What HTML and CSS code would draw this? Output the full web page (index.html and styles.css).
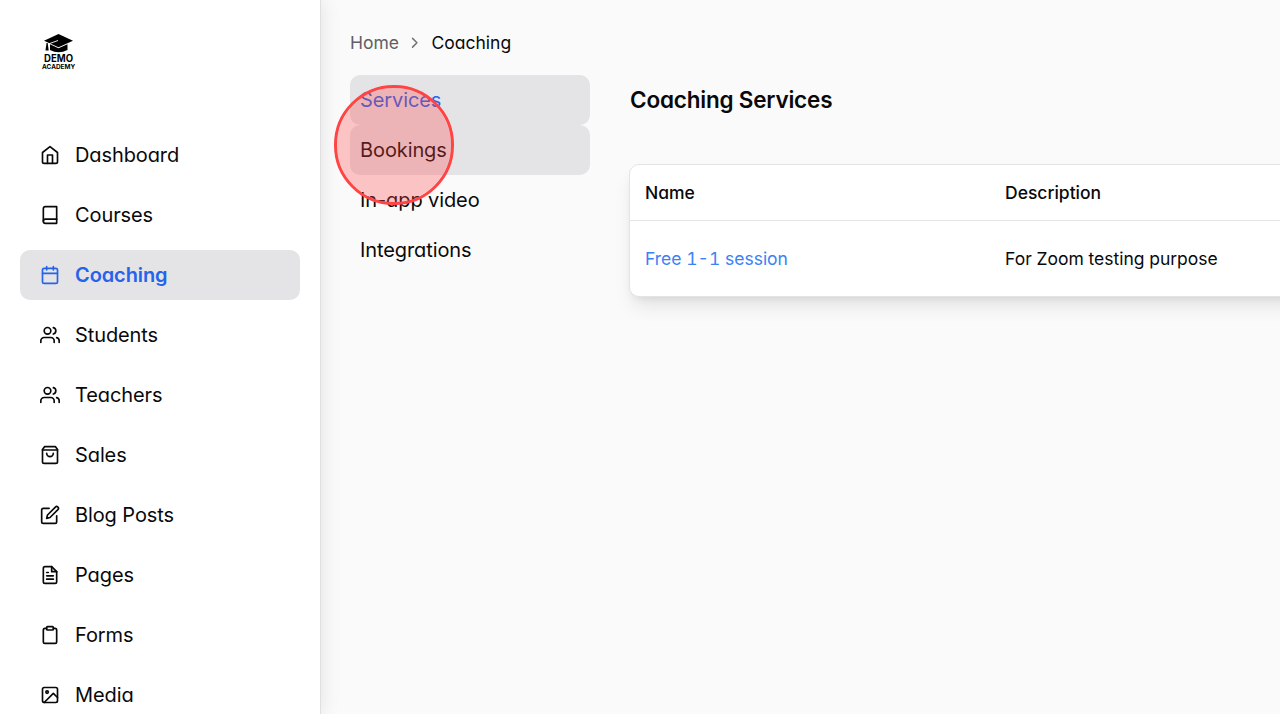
FILE: index.html
```html
<!DOCTYPE html>
<html lang="en">
<head>
    <meta charset="UTF-8">
    <meta name="viewport" content="width=device-width, initial-scale=1.0">
    <title>Coaching Services</title>
    <link rel="stylesheet" href="styles.css">
</head>
<body>
    <div class="layout">
        <aside class="sidebar">
            <div class="logo">
                <svg viewBox="0 0 34 36">
                    <path d="M2 6.700 16.500 0 31 6.700 16.500 13.200z"/>
                    <path d="M8 10.300V16q8.500 4.500 17.500 0v-5.700l-9 4z"/>
                    <path class="tassel" d="M16 6.500 6.900 9.800V14"/>
                    <path d="M4.500 9h1.200l1 7.500H3.500z"/>
                    <text class="logo-top" x="16.600" y="28" textLength="29" lengthAdjust="spacingAndGlyphs">DEMO</text>
                    <text class="logo-bottom" x="16.600" y="35" textLength="33" lengthAdjust="spacingAndGlyphs">ACADEMY</text>
                </svg>
            </div>
            <nav class="menu">
                <a class="menu-item">
                    <svg class="icon" viewBox="0 0 24 24"><path d="M3 9l9-7 9 7v11a2 2 0 0 1-2 2H5a2 2 0 0 1-2-2z"/><path d="M9 22V12h6v10"/></svg>
                    Dashboard
                </a>
                <a class="menu-item">
                    <svg class="icon" viewBox="0 0 24 24"><path d="M4 19.500A2.500 2.500 0 0 1 6.500 17H20"/><path d="M6.500 2H20v20H6.500A2.500 2.500 0 0 1 4 19.500v-15A2.500 2.500 0 0 1 6.500 2z"/></svg>
                    Courses
                </a>
                <a class="menu-item active">
                    <svg class="icon" viewBox="0 0 24 24"><rect x="3" y="4" width="18" height="18" rx="2"/><path d="M16 2v4M8 2v4M3 10h18"/></svg>
                    Coaching
                </a>
                <a class="menu-item">
                    <svg class="icon" viewBox="0 0 24 24"><path d="M17 21v-2a4 4 0 0 0-4-4H5a4 4 0 0 0-4 4v2"/><circle cx="9" cy="7" r="4"/><path d="M23 21v-2a4 4 0 0 0-3-3.870M16 3.130a4 4 0 0 1 0 7.750"/></svg>
                    Students
                </a>
                <a class="menu-item">
                    <svg class="icon" viewBox="0 0 24 24"><path d="M17 21v-2a4 4 0 0 0-4-4H5a4 4 0 0 0-4 4v2"/><circle cx="9" cy="7" r="4"/><path d="M23 21v-2a4 4 0 0 0-3-3.870M16 3.130a4 4 0 0 1 0 7.750"/></svg>
                    Teachers
                </a>
                <a class="menu-item">
                    <svg class="icon" viewBox="0 0 24 24"><path d="M5.400 2 3 5.500V20a2 2 0 0 0 2 2h14a2 2 0 0 0 2-2V5.500L18.600 2z"/><path d="M3 6h18M16 10a4 4 0 0 1-8 0"/></svg>
                    Sales
                </a>
                <a class="menu-item">
                    <svg class="icon" viewBox="0 0 24 24"><path d="M11 4H4a2 2 0 0 0-2 2v14a2 2 0 0 0 2 2h14a2 2 0 0 0 2-2v-7"/><path d="M18.500 2.500a2.121 2.121 0 0 1 3 3L12 15l-4 1 1-4 9.500-9.500z"/></svg>
                    Blog Posts
                </a>
                <a class="menu-item">
                    <svg class="icon" viewBox="0 0 24 24"><path d="M14 2H6a2 2 0 0 0-2 2v16a2 2 0 0 0 2 2h12a2 2 0 0 0 2-2V8z"/><path d="M14 2v6h6M16 13H8M16 17H8M10 9H8"/></svg>
                    Pages
                </a>
                <a class="menu-item">
                    <svg class="icon" viewBox="0 0 24 24"><path d="M16 4h2a2 2 0 0 1 2 2v14a2 2 0 0 1-2 2H6a2 2 0 0 1-2-2V6a2 2 0 0 1 2-2h2"/><rect x="8" y="2" width="8" height="4" rx="1"/></svg>
                    Forms
                </a>
                <a class="menu-item">
                    <svg class="icon" viewBox="0 0 24 24"><rect x="3" y="3" width="18" height="18" rx="2"/><circle cx="8.500" cy="8.500" r="1.500"/><path d="M21 15l-5-5L5 21"/></svg>
                    Media
                </a>
            </nav>
        </aside>

        <main class="main">
            <div class="breadcrumb">
                <a class="crumb">Home</a>
                <svg class="chevron" viewBox="0 0 24 24"><path d="m9 18 6-6-6-6"/></svg>
                <span>Coaching</span>
            </div>
            <div class="content">
                <nav class="subnav">
                    <a class="subnav-item selected">Services</a>
                    <a class="subnav-item hovered">Bookings<span class="click-marker"></span></a>
                    <a class="subnav-item">In-app video</a>
                    <a class="subnav-item">Integrations</a>
                </nav>
                <section class="services">
                    <h1>Coaching Services</h1>
                    <div class="card">
                        <div class="row head">
                            <span>Name</span>
                            <span>Description</span>
                        </div>
                        <div class="row">
                            <a class="link">Free 1-1 session</a>
                            <span>For Zoom testing purpose</span>
                        </div>
                    </div>
                </section>
            </div>
        </main>
    </div>
</body>
</html>
```

FILE: styles.css
```css
* {
    box-sizing: border-box;
}
body {
    margin: 0;
    font-family: Inter, "Liberation Sans", sans-serif;
    font-size: 20px;
    color: #09090b;
    background: #fafafa;
    font-feature-settings: "cv11";
}
.layout {
    display: flex;
    height: 100vh;
    overflow: hidden;
}
.sidebar {
    flex: 0 0 321px;
    padding: 0 20px;
    background: #fff;
    border-right: 1px solid #e0e0e2;
    box-shadow: 0 0 19px rgba(0, 0, 0, 0.1);
}
.logo {
    height: 130px;
    padding: 34px 0 0 22px;
}
.logo svg {
    display: block;
    width: 34px;
    height: 36px;
    overflow: visible;
}
.tassel {
    fill: none;
    stroke: #fff;
    stroke-width: 0.9;
}
.logo text {
    font-weight: 700;
    text-anchor: middle;
}
.logo-top {
    font-size: 10px;
}
.logo-bottom {
    font-size: 6.5px;
}
.menu {
    display: flex;
    flex-direction: column;
    gap: 10px;
}
.menu-item {
    display: flex;
    align-items: center;
    gap: 15px;
    height: 50px;
    flex-shrink: 0;
    width: 280px;
    padding: 0 20px;
    border-radius: 10px;
    letter-spacing: -0.1px;
}
.menu-item.active {
    background: #e4e4e7;
    color: #2563eb;
    font-weight: 600;
}
.icon {
    width: 20px;
    height: 20px;
    fill: none;
    stroke: currentColor;
    stroke-width: 2;
    stroke-linecap: round;
    stroke-linejoin: round;
}
.main {
    flex: 1;
    min-width: 0;
    padding: 30px 0 0 29px;
}
.breadcrumb {
    display: flex;
    align-items: center;
    height: 25px;
    font-size: 17.5px;
}
.crumb {
    color: #5f5f68;
}
.chevron {
    width: 17.5px;
    height: 17.5px;
    margin: 0 8px 0 7px;
    fill: none;
    stroke: #71717a;
    stroke-width: 2;
    stroke-linecap: round;
    stroke-linejoin: round;
}
.content {
    display: flex;
    gap: 40px;
    margin-top: 20px;
}
.subnav {
    flex: 0 0 240px;
}
.subnav-item {
    position: relative;
    display: flex;
    align-items: center;
    height: 50px;
    padding: 0 10px;
    border-radius: 10px;
    letter-spacing: -0.1px;
}
.selected,
.hovered {
    background: #e4e4e7;
}
.selected {
    color: #2563eb;
}
.click-marker {
    position: absolute;
    z-index: 1;
    left: -16px;
    top: -40px;
    width: 119.5px;
    height: 119.5px;
    border: 3px solid #ff4444;
    border-radius: 50%;
    background: rgba(255, 68, 68, 0.3);
    background-clip: padding-box;
}
.services {
    flex: 0 0 720px;
}
h1 {
    margin: 0 0 39px;
    font-size: 22.5px;
    line-height: 50px;
    font-weight: 600;
    letter-spacing: -0.2px;
}
.card {
    margin-left: -1px;
    background: #fff;
    border: 1px solid #e4e4e7;
    border-radius: 10px;
    box-shadow: 0 12px 19px -4px rgba(0, 0, 0, 0.1), 0 5px 8px -5px rgba(0, 0, 0, 0.1);
}
.row {
    display: grid;
    grid-template-columns: 360px 1fr;
    align-items: center;
    height: 75px;
    padding: 0 15px;
    font-size: 17.5px;
    font-feature-settings: "cv11", "tnum";
}
.row.head {
    height: 56px;
    border-bottom: 1px solid #e4e4e7;
    font-weight: 500;
}
.link {
    color: #3b82f6;
}
```
